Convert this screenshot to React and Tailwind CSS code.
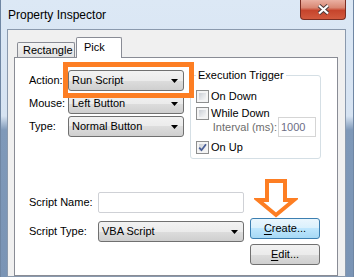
import React from 'react';

const font = { fontFamily: '"Liberation Sans", Arial, sans-serif' };

function Combo({ value, className = '' }) {
  return (
    <div
      className={`h-[21px] flex items-center justify-between pl-[3px] pr-[5px] border border-[#707070] rounded-[3px] bg-[linear-gradient(to_bottom,#f2f2f2_0%,#ebebeb_50%,#dddddd_50%,#cfcfcf_100%)] text-black ${className}`}
    >
      <span>{value}</span>
      <svg width="7" height="4" viewBox="0 0 7 4">
        <path d="M0 0h7L3.5 4z" fill="#000" />
      </svg>
    </div>
  );
}

function Check({ label, checked }) {
  return (
    <div className="flex items-center gap-[2px]">
      <div className="w-[13px] h-[13px] border border-[#8e8f8f] bg-[#f4f4f4] p-[2px]">
        <div className="w-full h-full relative bg-[linear-gradient(135deg,#cbcfd5_0%,#e4e6e9_55%,#f6f6f6_100%)]">
          {checked && (
            <svg width="9" height="9" viewBox="0 0 9 9" className="absolute -left-px -top-px">
              <path d="M1.2 4.6 L3.5 7.2 L8 1.3" fill="none" stroke="#4a5f97" strokeWidth="1.8" />
            </svg>
          )}
        </div>
      </div>
      <span>{label}</span>
    </div>
  );
}

function Button({ children, hot }) {
  return (
    <button
      className={`w-[70px] h-[21px] rounded-[3px] border text-black ${
        hot
          ? 'border-[#3c7fb1] bg-[linear-gradient(to_bottom,#eaf6fd_0%,#d9f0fc_50%,#bee6fd_50%,#a7d9f5_100%)]'
          : 'border-[#707070] bg-[linear-gradient(to_bottom,#f2f2f2_0%,#ebebeb_50%,#dddddd_50%,#cfcfcf_100%)]'
      }`}
    >
      {children}
    </button>
  );
}

export default function App() {
  return (
    <div
      style={font}
      className="relative w-[354px] h-[277px] overflow-hidden flex flex-col border-x border-[#6f86a3] bg-[linear-gradient(to_bottom,#dce8f5_0px,#d6e3f2_116px,#7f99b9_130px,#7a94b5_100%)] text-[11px] text-black"
    >
      {/* title bar */}
      <div className="h-[29px] flex items-start shrink-0">
        <div className="pl-[7px] pt-[8px] text-[12px] leading-[14px]">Property Inspector</div>
        <div className="ml-auto mr-[7px] w-[46px] h-[20px] rounded-b-[4px] border border-t-0 border-[#7a2d22] flex items-center justify-center bg-[linear-gradient(to_bottom,#eab0a2_0%,#d98874_40%,#c6442c_55%,#d25a3e_100%)]">
          <svg width="13" height="11" viewBox="0 0 13 11">
            <path d="M2 1.5 L11 9.5 M11 1.5 L2 9.5" stroke="#4a3a3a" strokeWidth="4" />
            <path d="M2 1.5 L11 9.5 M11 1.5 L2 9.5" stroke="#ffffff" strokeWidth="2.2" />
          </svg>
        </div>
      </div>

      {/* client area */}
      <div className="flex-1 flex flex-col ml-[6px] mr-[7px] border border-[#8a99ad] bg-[#f0f0f0] pt-[7px] pl-[6px] pr-[7px]">
        {/* tabs */}
        <div className="flex items-end h-[21px] -mb-px">
          <div className="ml-[3px] w-[58px] h-[16px] border border-b-0 border-[#898c95] rounded-t-[2px] bg-[linear-gradient(to_bottom,#f3f3f3,#e2e2e2)] pl-[5px] leading-[14px]">
            Rectangle
          </div>
          <div className="relative z-10 ml-px w-[46px] h-[21px] border border-b-0 border-[#898c95] rounded-t-[2px] bg-white pl-[7px] pt-[2px] leading-[14px]">
            Pick
          </div>
        </div>

        {/* panel */}
        <div className="flex-1 border border-[#898c95] bg-white pt-[10px] pl-[14px]">
          <div className="flex items-start">
            <div className="mt-[2px] grid grid-cols-[39px_116px] gap-y-[2px] items-center">
              <span>Action:</span>
              <Combo value="Run Script" />
              <span>Mouse:</span>
              <Combo value="Left Button" />
              <span>Type:</span>
              <Combo value="Normal Button" />
            </div>

            <fieldset className="ml-[6px] w-[131px] h-[91px] border border-[#d5dfe5] rounded-[3px] pl-[5px]">
              <legend className="px-[2px] leading-[14px]">Execution Trigger</legend>
              <div className="pt-[6px] flex flex-col">
                <div className="h-[17px] flex items-center">
                  <Check label="On Down" />
                </div>
                <div className="h-[17px] flex items-center">
                  <Check label="While Down" />
                </div>
                <div className="-mt-[5px] h-[20px] flex items-center justify-end pr-[4px]">
                  <span className="mr-[1px] text-[#6d6d6d]">Interval (ms):</span>
                  <div className="w-[38px] h-[20px] border border-[#d5d5d5] bg-white pl-[2px] flex items-center text-[#6d6d85]">
                    1000
                  </div>
                </div>
                <div className="mt-[2px] h-[16px] flex items-center">
                  <Check label="On Up" checked />
                </div>
              </div>
            </fieldset>
          </div>

          <div className="mt-[33px] flex items-start">
            <div className="grid grid-cols-[69px_146px] gap-y-[8px] items-center">
              <span>Script Name:</span>
              <div className="h-[21px] border border-[#cfd1d6] rounded-[2px] bg-white" />
              <span>Script Type:</span>
              <Combo value="VBA Script" />
            </div>
            <div className="ml-[6px] mt-[26px] flex flex-col gap-[5px]">
              <Button hot>
                <span className="underline underline-offset-[2px]">C</span>reate...
              </Button>
              <Button>
                <span className="underline underline-offset-[2px]">E</span>dit...
              </Button>
            </div>
          </div>
        </div>
      </div>

      {/* annotations */}
      <div className="absolute left-[62px] top-[62px] w-[131px] h-[36px] border-[5px] border-[#fd7e23]" />
      <svg className="absolute left-[253px] top-[177px]" width="44" height="44" viewBox="0 0 44 44">
        <path
          d="M13 4 H31 V23 H40 L22 38 L4 23 H13 Z"
          fill="#ffffff"
          stroke="#fd7e23"
          strokeWidth="4"
          strokeLinejoin="miter"
        />
      </svg>
    </div>
  );
}
